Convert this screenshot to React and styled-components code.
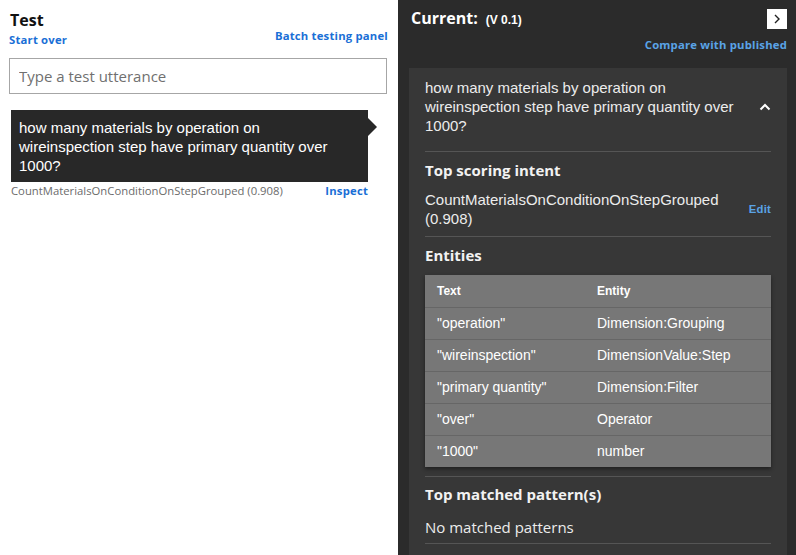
import React from "react";
import styled, { createGlobalStyle } from "styled-components";

const GlobalStyle = createGlobalStyle`
  html, body {
    margin: 0;
    padding: 0;
    background: #ffffff;
  }
  body {
    font-family: "Open Sans", "Liberation Sans", sans-serif;
  }
`;

const Page = styled.div`
  display: flex;
  width: 796px;
  height: 555px;
  overflow: hidden;
`;

const LeftPane = styled.div`
  width: 398px;
  flex-shrink: 0;
  background: #ffffff;
  padding: 9px 10px 0 9px;
  box-sizing: border-box;
`;

const TitleRow = styled.div`
  display: flex;
  justify-content: space-between;
  align-items: flex-end;
`;

const TitleBlock = styled.div`
  display: flex;
  flex-direction: column;
`;

const Title = styled.div`
  font-size: 16px;
  font-weight: 700;
  color: #111;
  line-height: 22px;
  padding-left: 1px;
  margin-bottom: 1px;
`;

const Link = styled.a`
  font-size: 11.3px;
  font-weight: 700;
  color: ${(p) => (p.dark ? "#5aa3e6" : "#1a6fd6")};
  cursor: pointer;
  line-height: 15px;
  letter-spacing: 0.2px;
`;

const TopLink = styled(Link)`
  margin-bottom: 4px;
`;

const Input = styled.input`
  display: block;
  width: 378px;
  height: 36px;
  margin-top: 11px;
  box-sizing: border-box;
  border: 1px solid #a6a6a6;
  padding: 0 9px;
  font-family: "Open Sans", sans-serif;
  font-size: 15px;
  outline: none;
  &::placeholder {
    color: #707070;
  }
`;

const Bubble = styled.div`
  position: relative;
  margin-top: 16px;
  margin-left: 2px;
  width: 357px;
  box-sizing: border-box;
  background: #282828;
  color: #ffffff;
  font-family: "Liberation Sans", Arial, sans-serif;
  font-size: 15px;
  line-height: 19px;
  padding: 8px 9px 7px 8px;

  &::after {
    content: "";
    position: absolute;
    right: -9px;
    top: 8px;
    border-top: 9px solid transparent;
    border-bottom: 9px solid transparent;
    border-left: 9px solid #282828;
  }
`;

const BubbleMeta = styled.div`
  display: flex;
  justify-content: space-between;
  align-items: center;
  width: 357px;
  margin-left: 2px;
  margin-top: 1px;
`;

const Muted = styled.span`
  font-size: 11.3px;
  color: #6b6b6b;
`;

const RightPane = styled.div`
  flex: 1;
  background: #2b2b2b;
  padding: 7px 9px 0 11px;
  box-sizing: border-box;
  display: flex;
  flex-direction: column;
`;

const HeaderRow = styled.div`
  display: flex;
  justify-content: space-between;
  align-items: center;
`;

const Current = styled.div`
  display: flex;
  align-items: baseline;
  gap: 8px;
  color: #ffffff;
  font-size: 16px;
  font-weight: 700;
  padding-left: 2px;
`;

const Version = styled.span`
  font-family: "Liberation Sans", Arial, sans-serif;
  font-size: 12px;
  font-weight: 700;
`;

const SquareButton = styled.div`
  width: 20px;
  height: 20px;
  background: #ffffff;
  display: flex;
  align-items: center;
  justify-content: center;
  margin-top: 1px;
`;

const CompareRow = styled.div`
  display: flex;
  justify-content: flex-end;
  margin-top: 8px;
`;

const Card = styled.div`
  margin-top: 16px;
  flex: 1;
  background: #373737;
  padding: 0 16px;
`;

const Utterance = styled.div`
  display: flex;
  justify-content: space-between;
  align-items: center;
  padding: 10px 0 16px;
  border-bottom: 1px solid #555555;
  color: #ececec;
  font-family: "Liberation Sans", Arial, sans-serif;
  font-size: 15px;
  line-height: 19px;
`;

const UtteranceText = styled.span`
  width: 310px;
`;

const Section = styled.div`
  padding: ${(p) => p.pad || "7px 0 9px"};
  border-bottom: 1px solid #555555;
`;

const SectionTitle = styled.div`
  color: #f2f2f2;
  font-size: 15px;
  font-weight: 700;
  line-height: 22px;
`;

const IntentRow = styled.div`
  display: flex;
  justify-content: space-between;
  align-items: center;
  margin-top: 9px;
  color: #ececec;
  font-family: "Liberation Sans", Arial, sans-serif;
  font-size: 15px;
  line-height: 19px;
`;

const Table = styled.table`
  width: 100%;
  border-collapse: collapse;
  margin-top: 9px;
  background: #777777;
  box-shadow: 0 2px 4px rgba(0, 0, 0, 0.45);
  font-family: "Liberation Sans", Arial, sans-serif;
  color: #ffffff;
`;

const Th = styled.th`
  text-align: left;
  font-size: 12px;
  font-weight: 700;
  height: 32px;
  padding: 0 12px;
  box-sizing: border-box;
  border-bottom: 1px solid #666666;
  width: ${(p) => p.w || "auto"};
`;

const Td = styled.td`
  font-size: 14px;
  height: 32px;
  padding: 0 12px;
  box-sizing: border-box;
  border-bottom: 1px solid #666666;
`;

const Tr = styled.tr`
  &:last-child td {
    border-bottom: none;
  }
`;

const Plain = styled.div`
  color: #ececec;
  font-size: 15px;
  margin-top: 12px;
  line-height: 20px;
`;

const entities = [
  { text: '"operation"', entity: "Dimension:Grouping" },
  { text: '"wireinspection"', entity: "DimensionValue:Step" },
  { text: '"primary quantity"', entity: "Dimension:Filter" },
  { text: '"over"', entity: "Operator" },
  { text: '"1000"', entity: "number" },
];

const utterance =
  "how many materials by operation on wireinspection step have primary quantity over 1000?";

function App() {
  return (
    <Page>
      <GlobalStyle />
      <LeftPane>
        <TitleRow>
          <TitleBlock>
            <Title>Test</Title>
            <Link>Start over</Link>
          </TitleBlock>
          <TopLink>Batch testing panel</TopLink>
        </TitleRow>
        <Input placeholder="Type a test utterance" />
        <Bubble>{utterance}</Bubble>
        <BubbleMeta>
          <Muted>CountMaterialsOnConditionOnStepGrouped (0.908)</Muted>
          <Link>Inspect</Link>
        </BubbleMeta>
      </LeftPane>

      <RightPane>
        <HeaderRow>
          <Current>
            Current:<Version>(V 0.1)</Version>
          </Current>
          <SquareButton>
            <svg width="10" height="10" viewBox="0 0 10 10">
              <path d="M3 1 L7 5 L3 9" fill="none" stroke="#222" strokeWidth="1.4" />
            </svg>
          </SquareButton>
        </HeaderRow>
        <CompareRow>
          <Link dark>Compare with published</Link>
        </CompareRow>
        <Card>
          <Utterance>
            <UtteranceText>{utterance}</UtteranceText>
            <svg width="12" height="8" viewBox="0 0 12 8">
              <path d="M1.5 6.5 L6 2 L10.5 6.5" fill="none" stroke="#fff" strokeWidth="2" />
            </svg>
          </Utterance>
          <Section pad="7px 0 8px">
            <SectionTitle>Top scoring intent</SectionTitle>
            <IntentRow>
              <span>
                CountMaterialsOnConditionOnStepGrouped
                <br />
                (0.908)
              </span>
              <Link dark>Edit</Link>
            </IntentRow>
          </Section>
          <Section pad="7px 0 9px">
            <SectionTitle>Entities</SectionTitle>
            <Table>
              <thead>
                <tr>
                  <Th w="160px">Text</Th>
                  <Th>Entity</Th>
                </tr>
              </thead>
              <tbody>
                {entities.map((e, i) => (
                  <Tr key={i}>
                    <Td>{e.text}</Td>
                    <Td>{e.entity}</Td>
                  </Tr>
                ))}
              </tbody>
            </Table>
          </Section>
          <Section pad="6px 0 6px">
            <SectionTitle>Top matched pattern(s)</SectionTitle>
            <Plain>No matched patterns</Plain>
          </Section>
        </Card>
      </RightPane>
    </Page>
  );
}

export default App;
